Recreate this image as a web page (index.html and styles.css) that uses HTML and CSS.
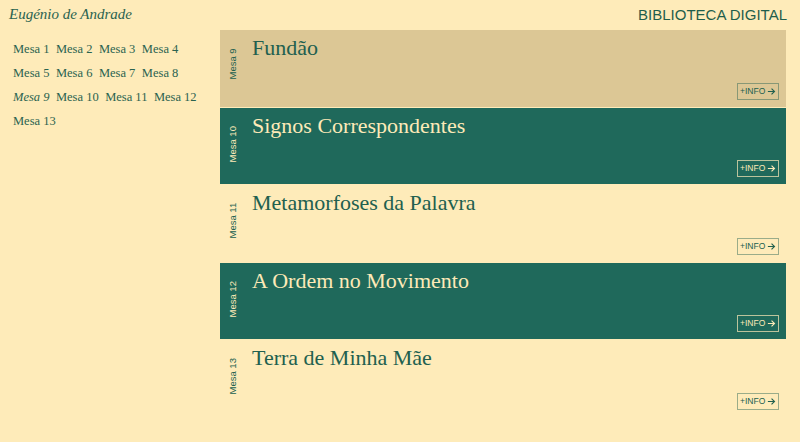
FILE: index.html
```html
<!DOCTYPE html>
<html lang="pt">
<head>
<meta charset="utf-8">
<title>Biblioteca Digital</title>
<link rel="stylesheet" href="styles.css">
</head>
<body>
<div class="page">
  <header class="header">
    <div class="author">Eugénio de Andrade</div>
    <div class="brand">BIBLIOTECA DIGITAL</div>
  </header>
  <div class="body">
    <nav class="sidebar">
      <a class="mesa">Mesa 1</a>
      <a class="mesa">Mesa 2</a>
      <a class="mesa">Mesa 3</a>
      <a class="mesa">Mesa 4</a>
      <a class="mesa">Mesa 5</a>
      <a class="mesa">Mesa 6</a>
      <a class="mesa">Mesa 7</a>
      <a class="mesa">Mesa 8</a>
      <a class="mesa current">Mesa 9</a>
      <a class="mesa">Mesa 10</a>
      <a class="mesa">Mesa 11</a>
      <a class="mesa">Mesa 12</a>
      <a class="mesa">Mesa 13</a>
    </nav>
    <main class="cards">
      <section class="card tan">
        <div class="label">Mesa 9</div>
        <div class="content">
          <h2 class="title">Fundão</h2>
          <a class="info">+INFO <svg viewBox="0 0 10 10" class="arrow"><path d="M1 5H8.5M5.2 1.6L8.6 5 5.2 8.4" fill="none" stroke="currentColor" stroke-width="1.3"/></svg></a>
        </div>
      </section>
      <section class="card green">
        <div class="label">Mesa 10</div>
        <div class="content">
          <h2 class="title">Signos Correspondentes</h2>
          <a class="info">+INFO <svg viewBox="0 0 10 10" class="arrow"><path d="M1 5H8.5M5.2 1.6L8.6 5 5.2 8.4" fill="none" stroke="currentColor" stroke-width="1.3"/></svg></a>
        </div>
      </section>
      <section class="card cream">
        <div class="label">Mesa 11</div>
        <div class="content">
          <h2 class="title">Metamorfoses da Palavra</h2>
          <a class="info">+INFO <svg viewBox="0 0 10 10" class="arrow"><path d="M1 5H8.5M5.2 1.6L8.6 5 5.2 8.4" fill="none" stroke="currentColor" stroke-width="1.3"/></svg></a>
        </div>
      </section>
      <section class="card green">
        <div class="label">Mesa 12</div>
        <div class="content">
          <h2 class="title">A Ordem no Movimento</h2>
          <a class="info">+INFO <svg viewBox="0 0 10 10" class="arrow"><path d="M1 5H8.5M5.2 1.6L8.6 5 5.2 8.4" fill="none" stroke="currentColor" stroke-width="1.3"/></svg></a>
        </div>
      </section>
      <section class="card cream">
        <div class="label">Mesa 13</div>
        <div class="content">
          <h2 class="title">Terra de Minha Mãe</h2>
          <a class="info">+INFO <svg viewBox="0 0 10 10" class="arrow"><path d="M1 5H8.5M5.2 1.6L8.6 5 5.2 8.4" fill="none" stroke="currentColor" stroke-width="1.3"/></svg></a>
        </div>
      </section>
    </main>
  </div>
</div>
</body>
</html>
```

FILE: styles.css
```css
* { box-sizing: border-box; }
html, body {
  margin: 0;
  padding: 0;
  background: #feebb9;
  color: #21604f;
}
body {
  width: 800px;
  height: 442px;
  overflow: hidden;
}
.page {
  padding-right: 14px;
}
.header {
  height: 30px;
  display: flex;
  justify-content: space-between;
  align-items: flex-start;
}
.author {
  font-family: "Liberation Serif", serif;
  font-style: italic;
  font-size: 15px;
  line-height: 18px;
  padding: 5px 0 0 9px;
  color: #2a6350;
}
.brand {
  font-family: "Liberation Sans", Arial, sans-serif;
  font-size: 15px;
  line-height: 18px;
  padding-top: 6px;
  margin-right: -1px;
  color: #1f5e4b;
}
.body {
  display: grid;
  grid-template-columns: 220px 1fr;
}
.sidebar {
  width: 220px;
  display: flex;
  flex-wrap: wrap;
  align-content: flex-start;
  column-gap: 6.5px;
  padding: 7px 20px 0 13px;
  font-family: "Liberation Serif", serif;
  font-size: 12.5px;
  line-height: 24px;
}
.mesa {
  color: #2a6350;
  white-space: nowrap;
}
.current { font-style: italic; }
.cards {
  display: flex;
  flex-direction: column;
  gap: 1px;
}
.card {
  height: 76.5px;
  display: grid;
  grid-template-columns: 32px 1fr;
}
.card.tan { background: #dcc795; color: #21604f; }
.card.green { background: #1f695b; color: #fdeab8; }
.card.cream { background: #feebb9; color: #21604f; }
.label {
  writing-mode: vertical-rl;
  transform: rotate(180deg);
  font-family: "Liberation Sans", Arial, sans-serif;
  font-size: 9.5px;
  line-height: 26px;
  text-align: right;
  padding-bottom: 18px;
  padding-right: 0;
}
.content {
  display: flex;
  flex-direction: column;
  justify-content: space-between;
  align-items: flex-end;
  padding: 5px 7px 7px 0;
}
.title {
  align-self: flex-start;
  margin: 0;
  font-family: "Liberation Serif", serif;
  font-weight: normal;
  font-size: 22px;
  line-height: 26px;
}
.info {
  display: flex;
  align-items: center;
  gap: 2px;
  height: 17px;
  width: 42px;
  padding: 0 2px;
  border: 1px solid rgba(33, 96, 79, 0.45);
  font-family: "Liberation Sans", Arial, sans-serif;
  font-size: 8.5px;
  line-height: 15px;
}
.green .info { border-color: rgba(253, 234, 184, 0.7); }
.arrow {
  width: 11px;
  height: 11px;
}
```
